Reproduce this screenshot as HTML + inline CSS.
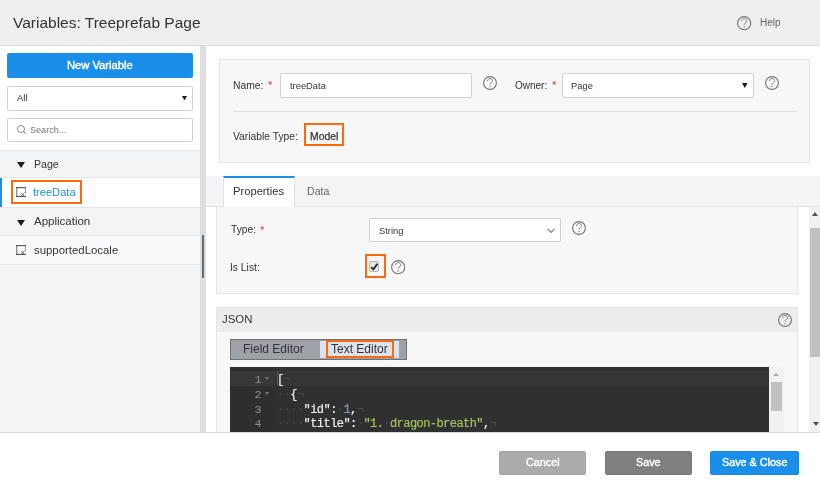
<!DOCTYPE html>
<html><head><meta charset="utf-8">
<style>
*{box-sizing:border-box;margin:0;padding:0}
html,body{width:820px;height:490px;overflow:hidden;background:#fff}
body{position:relative;font-family:"Liberation Sans",sans-serif;color:#333}
.a{position:absolute}
.t{position:absolute;line-height:1;white-space:pre;will-change:transform}
.orange{position:absolute;border:2.8px solid #fd6a0c}
.req{position:absolute;will-change:transform;line-height:1;color:#e53935;font-size:11px}
.tri{position:absolute;width:0;height:0;border-left:4.5px solid transparent;border-right:4.5px solid transparent;border-top:6px solid #1b1b1b}
.mono{font-family:"Liberation Mono",monospace}
.med{-webkit-text-stroke:0.25px currentColor}
.btn{position:absolute;will-change:transform;color:#fff;font-size:10.8px;line-height:1;-webkit-text-stroke:0.4px #fff}
</style></head>
<body>
<svg width="0" height="0" style="position:absolute">
 <defs>
  <symbol id="hq" viewBox="0 0 14 14">
   <circle cx="7" cy="7" r="6.4" fill="none" stroke="#747474" stroke-width="1.1"/>
   <path d="M4.5 5.2 C4.5 3.5 5.7 2.5 7 2.5 C8.4 2.5 9.5 3.5 9.5 4.8 C9.5 6.1 8.3 6.6 7.6 7.2 C7.1 7.7 7 8.1 7 8.7" fill="none" stroke="#7a7a7a" stroke-width="0.9"/>
   <circle cx="7" cy="10.6" r="0.7" fill="#777"/>
  </symbol>
  <symbol id="vi" viewBox="0 0 10 10">
   <path d="M0.7 0.3 V9.6" stroke="#8a8a8a" stroke-width="1.3"/>
   <path d="M9.4 0.3 V5.4" stroke="#9a9a9a" stroke-width="1"/>
   <path d="M0 0.6 H10" stroke="#555" stroke-width="1.1"/>
   <path d="M0 9.45 H10" stroke="#555" stroke-width="1.1"/>
   <path d="M5.2 6.1 L8.3 9.1 M8.3 6.1 L5.2 9.1" stroke="#555" stroke-width="0.95"/>
   <path d="M9.3 5 V6.3" stroke="#666" stroke-width="0.9"/>
  </symbol>
  <symbol id="dd" viewBox="0 0 6 5">
   <path d="M0 0 H6 L3 5 Z" fill="#1b1b1b"/>
  </symbol>
 </defs>
</svg>
<!-- header -->
<div class="a" style="left:0;top:0;width:820px;height:46px;background:#eeeeee;border-bottom:1px solid #dadada"></div>
<div class="t" style="left:13.3px;top:14.8px;font-size:15.5px;color:#333">Variables: Treeprefab Page</div>
<svg class="a" style="left:737.3px;top:16.3px" width="14.4" height="14.4"><use href="#hq"/></svg>
<div class="t" style="left:760.2px;top:18.2px;font-size:10px;color:#666">Help</div>

<!-- left panel -->
<div class="a" style="left:0;top:46px;width:200px;height:386px;background:#f3f4f6"></div>
<div class="a" style="left:0;top:46px;width:200px;height:104px;background:#fff"></div>
<div class="a" style="left:7px;top:53px;width:186px;height:24.5px;background:#1a8fea;border-radius:2px"></div>
<div class="btn" style="left:67px;top:60.2px;font-size:11.2px">New Variable</div>
<div class="a" style="left:7px;top:86px;width:186px;height:24.6px;background:#fff;border:1px solid #cfcfcf;border-radius:2px"></div>
<div class="t" style="left:16.7px;top:93.4px;font-size:9.4px;color:#333">All</div>
<svg class="a" style="left:181.5px;top:96px" width="5" height="4.6" viewBox="0 0 6 5" preserveAspectRatio="none"><use href="#dd"/></svg>
<div class="a" style="left:7px;top:118px;width:186px;height:24px;background:#fff;border:1px solid #cfcfcf;border-radius:2px"></div>
<div class="a" style="left:16.5px;top:124.5px;width:8.5px;height:8.5px;border:1.2px solid #888;border-radius:50%"></div>
<div class="a" style="left:22.5px;top:131.5px;width:3px;height:1.3px;background:#888;transform:rotate(45deg)"></div>
<div class="t" style="left:29.8px;top:125.6px;font-size:9.1px;color:#777">Search...</div>

<!-- list -->
<div class="a" style="left:0;top:150px;width:200px;height:1px;background:#e3e7ea"></div>
<div class="a" style="left:0;top:151px;width:200px;height:26px;background:#f3f4f6"></div>
<div class="tri" style="left:17px;top:162px"></div>
<div class="t" style="left:33.9px;top:158.9px;font-size:10.6px;color:#333">Page</div>
<div class="a" style="left:0;top:177px;width:200px;height:1px;background:#e3e7ea"></div>
<div class="a" style="left:0;top:178px;width:200px;height:29px;background:#fff"></div>
<div class="a" style="left:0;top:178px;width:2.2px;height:29px;background:#1a8fea"></div>
<div class="orange" style="left:11px;top:180px;width:71px;height:24px"></div>
<svg class="a" style="left:16px;top:187px" width="10" height="10"><use href="#vi"/></svg>
<div class="t" style="left:33.4px;top:186.7px;font-size:11.1px;color:#1a8fea">treeData</div>
<div class="a" style="left:0;top:207px;width:200px;height:1px;background:#e3e7ea"></div>
<div class="a" style="left:0;top:208px;width:200px;height:27px;background:#f3f4f6"></div>
<div class="tri" style="left:17px;top:220px"></div>
<div class="t" style="left:33.8px;top:215.6px;font-size:11.5px;color:#333">Application</div>
<div class="a" style="left:0;top:235px;width:200px;height:1px;background:#e3e7ea"></div>
<div class="a" style="left:0;top:236px;width:200px;height:28px;background:#f9fafb"></div>
<svg class="a" style="left:16px;top:245px" width="10" height="10"><use href="#vi"/></svg>
<div class="t" style="left:33.7px;top:244.8px;font-size:11.4px;color:#333">supportedLocale</div>
<div class="a" style="left:0;top:264px;width:200px;height:1px;background:#e3e7ea"></div>

<!-- splitter -->
<div class="a" style="left:200px;top:46px;width:6px;height:386px;background:#dedede"></div>
<div class="a" style="left:202px;top:235px;width:2px;height:43px;background:#6a6a6a"></div>

<!-- name box -->
<div class="a" style="left:219px;top:59px;width:591px;height:104px;background:#f7f7f7;border:1px solid #e4e4e4"></div>
<div class="t" style="left:233.3px;top:80.8px;font-size:10.3px;color:#333">Name:</div>
<div class="req" style="left:267.5px;top:80.1px">*</div>
<div class="a" style="left:280px;top:73px;width:192px;height:25px;background:#fff;border:1px solid #d0d0d0;border-radius:2px"></div>
<div class="t" style="left:289.5px;top:81.8px;font-size:9.36px;color:#333">treeData</div>
<svg class="a" style="left:483px;top:76px" width="14" height="14"><use href="#hq"/></svg>
<div class="t" style="left:514.7px;top:81px;font-size:10px;color:#333">Owner:</div>
<div class="req" style="left:551.5px;top:80.1px">*</div>
<div class="a" style="left:562px;top:73px;width:192px;height:25px;background:#fff;border:1px solid #d0d0d0;border-radius:2px"></div>
<div class="t" style="left:571.4px;top:81.8px;font-size:9.36px;color:#333">Page</div>
<svg class="a" style="left:742.3px;top:83px" width="5.6" height="5" viewBox="0 0 6 5" preserveAspectRatio="none"><use href="#dd"/></svg>
<svg class="a" style="left:765px;top:76px" width="14" height="14"><use href="#hq"/></svg>
<div class="a" style="left:233px;top:111px;width:564px;height:1px;background:#dddddd"></div>
<div class="t" style="left:233.2px;top:131.9px;font-size:10.3px;color:#333">Variable Type:</div>
<div class="orange" style="left:304px;top:123px;width:40px;height:23px"></div>
<div class="t med" style="left:309.8px;top:131.9px;font-size:10.4px;color:#333">Model</div>

<!-- tabs -->
<div class="a" style="left:206px;top:176px;width:614px;height:31px;background:#f3f4f6;border-bottom:1px solid #e2e2e2"></div>
<div class="a" style="left:223px;top:176px;width:72px;height:31px;background:#fff;border:1px solid #e2e2e2;border-top:2px solid #1a8fea;border-bottom:none;border-bottom-left-radius:0"></div>
<div class="t" style="left:233.4px;top:186.1px;font-size:11.2px;color:#333">Properties</div>
<div class="t" style="left:306.5px;top:186px;font-size:10.6px;color:#666">Data</div>

<!-- properties box -->
<div class="a" style="left:216px;top:207px;width:582px;height:87px;background:#f7f7f7;border:1px solid #e4e4e4;border-top:none"></div>
<div class="t" style="left:231.3px;top:225.2px;font-size:10.2px;color:#333">Type:</div>
<div class="req" style="left:260px;top:224.7px">*</div>
<div class="a" style="left:369px;top:218px;width:192px;height:24px;background:#fff;border:1px solid #d0d0d0;border-radius:2px"></div>
<div class="t" style="left:378.7px;top:226.3px;font-size:9.4px;color:#333">String</div>
<svg class="a" style="left:546px;top:226px" width="10" height="8" viewBox="0 0 10 8"><path d="M1.6 2.9 L5.1 6.3 L8.6 2.9" fill="none" stroke="#8a8a8a" stroke-width="1.3"/></svg>
<svg class="a" style="left:572px;top:221.3px" width="14" height="14"><use href="#hq"/></svg>
<div class="t" style="left:230.4px;top:263px;font-size:10.3px;color:#333">Is List:</div>
<div class="orange" style="left:364.6px;top:254.4px;width:21px;height:23.4px;border-width:2.5px"></div>
<div class="a" style="left:368.9px;top:261.3px;width:10.4px;height:10.3px;background:#e6e6e6;border:1px solid #b5b5b5;border-radius:2px"></div>
<svg class="a" style="left:369px;top:261px" width="11" height="11" viewBox="0 0 11 11"><path d="M2.2 6.2 L4.4 8.4 L8.4 2.8" fill="none" stroke="#2a2a2a" stroke-width="1.9"/></svg>
<svg class="a" style="left:391.1px;top:260.2px" width="14.4" height="14.4"><use href="#hq"/></svg>

<!-- json panel -->
<div class="a" style="left:216px;top:307px;width:582px;height:140px;background:#f7f7f7;border:1px solid #e4e4e4"></div>
<div class="a" style="left:217px;top:308px;width:580px;height:24px;background:#ececec"></div>
<div class="t" style="left:221.9px;top:314.3px;font-size:11.4px;color:#333">JSON</div>
<svg class="a" style="left:778.4px;top:313.3px" width="14" height="14"><use href="#hq"/></svg>
<div class="a" style="left:230px;top:339px;width:177px;height:21px;background:#9ea2a8;border:1px solid #6f7378"></div>
<div class="a" style="left:320px;top:341px;width:79px;height:17px;background:#dbe2ec"></div>
<div class="orange" style="left:326px;top:340px;width:68px;height:17.8px;border-width:2.8px"></div>
<div class="t" style="left:242.7px;top:342.8px;font-size:12px;color:#333">Field Editor</div>
<div class="t" style="left:331.3px;top:342.8px;font-size:12px;color:#333">Text Editor</div>

<!-- editor -->
<div class="a" style="left:230px;top:367px;width:539px;height:70px;background:#303030"></div>
<div class="a" style="left:230px;top:367px;width:43px;height:70px;background:#2e2e2e"></div>
<div class="a" style="left:230px;top:371px;width:43px;height:15px;background:#383838"></div>
<div class="a" style="left:273px;top:371px;width:496px;height:15px;background:#363636"></div>
<div class="a" style="left:277px;top:371.3px;width:1.2px;height:14.6px;background:#41701c"></div>
<div class="t mono" style="left:230px;top:373.1px;width:31.6px;text-align:right;font-size:11.8px;line-height:14.8px;color:#8f8f8f">1
2
3
4</div>
<div class="tri" style="left:264.8px;top:377.2px;border-left-width:2.5px;border-right-width:2.5px;border-top-width:3px;border-top-color:#777"></div>
<div class="tri" style="left:264.8px;top:392px;border-left-width:2.5px;border-right-width:2.5px;border-top-width:3px;border-top-color:#777"></div>
<div class="t mono" style="left:276.8px;top:373px;font-size:12px;letter-spacing:-0.56px;line-height:14.8px;color:#f0f0f0;-webkit-text-stroke:0.2px #f0f0f0"><span>[</span><span style="color:#4a4a4a;-webkit-text-stroke:0">¬</span>
<span style="color:#4a4a4a;-webkit-text-stroke:0">··</span>{<span style="color:#4a4a4a;-webkit-text-stroke:0">¬</span>
<span style="color:#4a4a4a;-webkit-text-stroke:0">····</span>"id":<span style="color:#4a4a4a;-webkit-text-stroke:0">·</span><span style="color:#6e9fd0;-webkit-text-stroke-color:#6e9fd0">1</span>,<span style="color:#4a4a4a;-webkit-text-stroke:0">¬</span>
<span style="color:#4a4a4a;-webkit-text-stroke:0">····</span>"title":<span style="color:#4a4a4a;-webkit-text-stroke:0">·</span><span style="color:#a5c25c;-webkit-text-stroke-color:#a5c25c">"1.<span style="color:#4a4a4a;-webkit-text-stroke:0">·</span>dragon-breath"</span>,<span style="color:#4a4a4a;-webkit-text-stroke:0">¬</span></div>
<div class="a" style="left:769px;top:367px;width:14.5px;height:70px;background:#f1f1f1"></div>
<div class="tri" style="left:773px;top:373px;border-left-width:3.3px;border-right-width:3.3px;border-top:none;border-bottom:3.8px solid #a3a3a3"></div>
<div class="a" style="left:771.3px;top:382px;width:11px;height:29px;background:#c1c1c1"></div>

<!-- main scrollbar -->
<div class="a" style="left:809px;top:207px;width:11px;height:225px;background:#f1f1f1"></div>
<div class="tri" style="left:812px;top:212.3px;border-left-width:3.6px;border-right-width:3.6px;border-top:none;border-bottom:4px solid #505050"></div>
<div class="a" style="left:810px;top:228px;width:10px;height:129px;background:#c1c1c1"></div>
<div class="tri" style="left:812.6px;top:422.3px;border-left-width:3.6px;border-right-width:3.6px;border-top-width:4px;border-top-color:#505050"></div>

<!-- footer -->
<div class="a" style="left:0;top:432px;width:820px;height:58px;background:#fff;border-top:1px solid #dcdcdc"></div>
<div class="a" style="left:499px;top:451px;width:87px;height:24px;background:#ababab;border:1px solid #a3a3a3;border-radius:2px"></div>
<div class="btn" style="left:525.7px;top:457px">Cancel</div>
<div class="a" style="left:605px;top:451px;width:87px;height:24px;background:#808080;border:1px solid #787878;border-radius:2px"></div>
<div class="btn" style="left:635.7px;top:457px">Save</div>
<div class="a" style="left:710px;top:451px;width:89px;height:24px;background:#1a8fea;border:1px solid #1787de;border-radius:2px"></div>
<div class="btn" style="left:721.5px;top:457px">Save &amp; Close</div>
</body></html>
